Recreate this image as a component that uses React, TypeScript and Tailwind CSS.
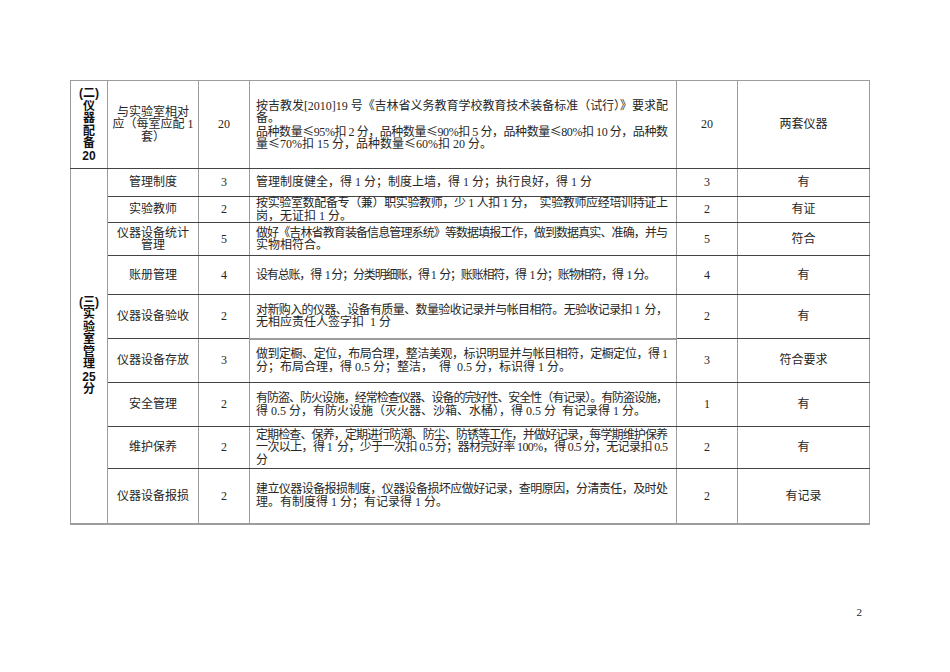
import { useLayoutEffect, useRef, useState } from "react";

const serif = "font-['Liberation_Serif','Noto_Sans_CJK_SC',serif]";
const FULL = 412;

type Row = {
  item: string[];
  score: string;
  rule: string[];
  fit?: (number | null)[];
  got: string;
  note: string;
  h: number;
};

const rows: Row[] = [
  {
    item: ["管理制度"],
    score: "3",
    rule: ["管理制度健全，得 1 分；制度上墙，得 1 分；执行良好，得 1 分"],
    fit: [null],
    got: "3",
    note: "有",
    h: 28,
  },
  {
    item: ["实验教师"],
    score: "2",
    rule: ["按实验室数配备专（兼）职实验教师，少 1 人扣 1 分，  实验教师应经培训持证上", "岗，无证扣 1 分。"],
    got: "2",
    note: "有证",
    h: 24,
  },
  {
    item: ["仪器设备统计", "管理"],
    score: "5",
    rule: ["做好《吉林省教育装备信息管理系统》等数据填报工作，做到数据真实、准确，并与", "实物相符合。"],
    got: "5",
    note: "符合",
    h: 33,
  },
  {
    item: ["账册管理"],
    score: "4",
    rule: ["设有总账，得  1 分；分类明细账，得 1  分；账账相符，得  1 分；账物相符，得  1 分。"],
    fit: [400],
    got: "4",
    note: "有",
    h: 39,
  },
  {
    item: ["仪器设备验收"],
    score: "2",
    rule: ["对新购入的仪器、设备有质量、数量验收记录并与帐目相符。无验收记录扣 1  分，", "无相应责任人签字扣  1 分"],
    got: "2",
    note: "有",
    h: 44,
  },
  {
    item: ["仪器设备存放"],
    score: "3",
    rule: ["做到定橱、定位，布局合理，整洁美观，标识明显并与帐目相符，定橱定位，得 1", "分；布局合理，得 0.5 分；整洁，  得  0.5 分，标识得 1 分。"],
    got: "3",
    note: "符合要求",
    h: 44,
  },
  {
    item: ["安全管理"],
    score: "2",
    rule: ["有防盗、防火设施，经常检查仪器、设备的完好性、安全性（有记录）。有防盗设施，", "得 0.5 分，有防火设施（灭火器、沙箱、水桶），得 0.5 分  有记录得 1 分。"],
    got: "1",
    note: "有",
    h: 44,
  },
  {
    item: ["维护保养"],
    score: "2",
    rule: [
      "定期检查、保养，定期进行防潮、防尘、防锈等工作，并做好记录，每学期维护保养",
      "一次以上，得 1  分，少于一次扣 0.5 分；器材完好率 100%，得 0.5 分，无记录扣 0.5",
      "分",
    ],
    got: "2",
    note: "有",
    h: 42,
  },
  {
    item: ["仪器设备报损"],
    score: "2",
    rule: ["建立仪器设备报损制度，仪器设备损坏应做好记录，查明原因，分清责任，及时处", "理。有制度得 1 分；有记录得 1 分。"],
    got: "2",
    note: "有记录",
    h: 55,
  },
];

const td = "border-x border-x-[#9c9c9c] border-y border-y-[#444] align-middle";

function Stack({ parts }: { parts: string[] }) {
  return (
    <div className="flex flex-col items-center font-['Liberation_Sans','Noto_Sans_CJK_SC',sans-serif] font-bold text-[12px] leading-[12.5px] text-[#111]">
      {parts.map((p, i) => (
        <span key={i} className="whitespace-nowrap">
          {p}
        </span>
      ))}
    </div>
  );
}

// stretches or squeezes a line to a given width, like Word's justified lines
function FitLine({ text, target }: { text: string; target: number | null }) {
  const ref = useRef<HTMLSpanElement>(null);
  const [ls, setLs] = useState(0);

  useLayoutEffect(() => {
    const el = ref.current;
    if (!el || !target) return;
    el.style.letterSpacing = "0px";
    const w = el.getBoundingClientRect().width;
    const n = Array.from(text).length;
    if (n > 1) setLs((target - w) / (n - 1));
  }, [text, target]);

  const parts = text.split("≤");
  return (
    <span ref={ref} className="inline-block whitespace-pre leading-[12.5px]" style={{ letterSpacing: ls }}>
      {parts.map((p, i) => (
        <span key={i}>
          {i > 0 && <span className="inline-block leading-[12px] font-['Noto_Sans_CJK_SC',sans-serif]">≤</span>}
          {p}
        </span>
      ))}
    </span>
  );
}

function Rule({ lines, fit }: { lines: string[]; fit?: (number | null)[] }) {
  return (
    <div className="text-left">
      {lines.map((l, i) => {
        const t = fit ? fit[i] ?? null : i < lines.length - 1 ? FULL : null;
        return (
          <div key={i} className="whitespace-pre h-[12.5px]">
            <FitLine text={l} target={t} />
          </div>
        );
      })}
    </div>
  );
}

function Center({ lines }: { lines: string[] }) {
  return (
    <div className="text-center">
      {lines.map((l, i) => (
        <div key={i} className="whitespace-pre">
          {l}
        </div>
      ))}
    </div>
  );
}

export default function App() {
  return (
    <div className={`w-[950px] h-[672px] bg-white pl-[70px] pt-[80px] ${serif} text-[12px] leading-[12.5px] text-[#262626]`}>
      <table className="w-[799px] table-fixed border-collapse border-t border-t-[#9c9c9c] border-b-2 border-b-[#9c9c9c] border-x border-x-[#9c9c9c]">
        <colgroup>
          <col className="w-[37px]" />
          <col className="w-[91px]" />
          <col className="w-[51px]" />
          <col className="w-[427px]" />
          <col className="w-[61px]" />
          <col className="w-[132px]" />
        </colgroup>
        <tbody>
          <tr className="h-[88px]">
            <td className={`${td} border-t-[#9c9c9c]`}>
              <Stack parts={["(二)", "仪", "器", "配", "备", "20"]} />
            </td>
            <td className={`${td} border-t-[#9c9c9c] px-1`}>
              <Center lines={["与实验室相对", "应（每室应配 1", "套）"]} />
            </td>
            <td className={`${td} border-t-[#9c9c9c] text-center`}>20</td>
            <td className={`${td} border-t-[#9c9c9c] pl-[6px]`}>
              <Rule
                lines={[
                  "按吉教发[2010]19 号《吉林省义务教育学校教育技术装备标准（试行）》要求配",
                  "备。",
                  "品种数量≤95%扣 2 分，品种数量≤90%扣 5 分，品种数量≤80%扣 10 分，品种数",
                  "量≤70%扣 15 分，品种数量≤60%扣 20 分。",
                ]}
                fit={[FULL, null, FULL, null]}
              />
            </td>
            <td className={`${td} border-t-[#9c9c9c] text-center`}>20</td>
            <td className={`${td} border-t-[#9c9c9c] text-center`}>两套仪器</td>
          </tr>
          {rows.map((r, i) => (
            <tr key={i} style={{ height: r.h }}>
              {i === 0 && (
                <td rowSpan={rows.length} className={td}>
                  <Stack parts={["(三)", "实", "验", "室", "管", "理", "25", "分"]} />
                </td>
              )}
              <td className={`${td} px-1`}>
                <Center lines={r.item} />
              </td>
              <td className={`${td} text-center`}>{r.score}</td>
              <td className={`${td} pl-[6px] ${i === 5 ? "border-t-2 border-t-[#9c9c9c]" : ""}`}>
                <Rule lines={r.rule} fit={r.fit} />
              </td>
              <td className={`${td} text-center`}>{r.got}</td>
              <td className={`${td} text-center`}>{r.note}</td>
            </tr>
          ))}
        </tbody>
      </table>
      <div className="w-[792px] mt-[81px] text-right text-[11px]">2</div>
    </div>
  );
}
